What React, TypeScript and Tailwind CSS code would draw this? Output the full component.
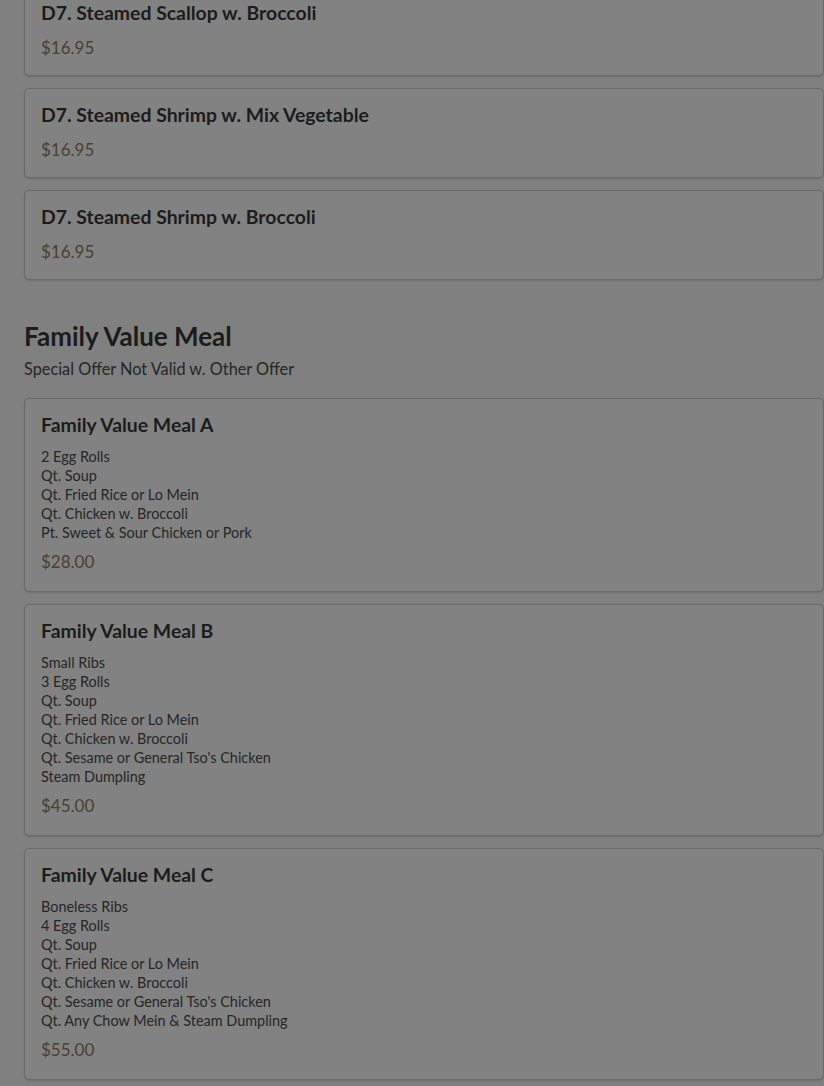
import React from "react";

type Item = { name: string; desc?: string[]; price: string };

const top: Item[] = [
  { name: "D7. Steamed Scallop w. Broccoli", price: "$16.95" },
  { name: "D7. Steamed Shrimp w. Mix Vegetable", price: "$16.95" },
  { name: "D7. Steamed Shrimp w. Broccoli", price: "$16.95" },
];

const family: Item[] = [
  {
    name: "Family Value Meal A",
    desc: ["2 Egg Rolls", "Qt. Soup", "Qt. Fried Rice or Lo Mein", "Qt. Chicken w. Broccoli", "Pt. Sweet & Sour Chicken or Pork"],
    price: "$28.00",
  },
  {
    name: "Family Value Meal B",
    desc: ["Small Ribs", "3 Egg Rolls", "Qt. Soup", "Qt. Fried Rice or Lo Mein", "Qt. Chicken w. Broccoli", "Qt. Sesame or General Tso's Chicken", "Steam Dumpling"],
    price: "$45.00",
  },
  {
    name: "Family Value Meal C",
    desc: ["Boneless Ribs", "4 Egg Rolls", "Qt. Soup", "Qt. Fried Rice or Lo Mein", "Qt. Chicken w. Broccoli", "Qt. Sesame or General Tso's Chicken", "Qt. Any Chow Mein & Steam Dumpling"],
    price: "$55.00",
  },
];

function Card({ item }: { item: Item }) {
  return (
    <div
      className={`w-[800px] rounded-[5px] border border-[#6a6a6a] bg-[#828282] px-4 pt-[15px] ${item.desc ? "pb-[17px]" : "pb-[15px]"} shadow-[0_1px_2px_rgba(0,0,0,0.15)]`}
    >
      <div className="text-[19.4px] leading-[22px] font-bold text-[#1c1c1c]">{item.name}</div>
      {item.desc ? (
        <div className="mt-[11px] text-[14.45px] leading-[19px] text-[#262626]">
          {item.desc.map((d, i) => (
            <div key={i}>{d}</div>
          ))}
        </div>
      ) : null}
      <div className={`${item.desc ? "mt-[8px]" : "mt-[12px]"} text-[17px] leading-[24px] text-[#4a4030]`}>{item.price}</div>
    </div>
  );
}

export default function App() {
  return (
    <div
      className="min-h-[1086px] w-[824px] overflow-hidden bg-[#808080]"
      style={{ fontFamily: "Lato, 'Noto Sans', sans-serif" }}
    >
      <div className="-mt-[14px] pl-6 flex flex-col">
        <div className="flex flex-col gap-[12px]">
          {top.map((it, i) => (
            <Card key={i} item={it} />
          ))}
        </div>
        <div className="mt-[40px] text-[26px] leading-[32px] font-bold text-[#1c1c1c]">Family Value Meal</div>
        <div className="mt-[5px] text-[16.3px] leading-[24px] text-[#262626]">Special Offer Not Valid w. Other Offer</div>
        <div className="mt-[17px] flex flex-col gap-[12px]">
          {family.map((it, i) => (
            <Card key={i} item={it} />
          ))}
        </div>
      </div>
    </div>
  );
}
